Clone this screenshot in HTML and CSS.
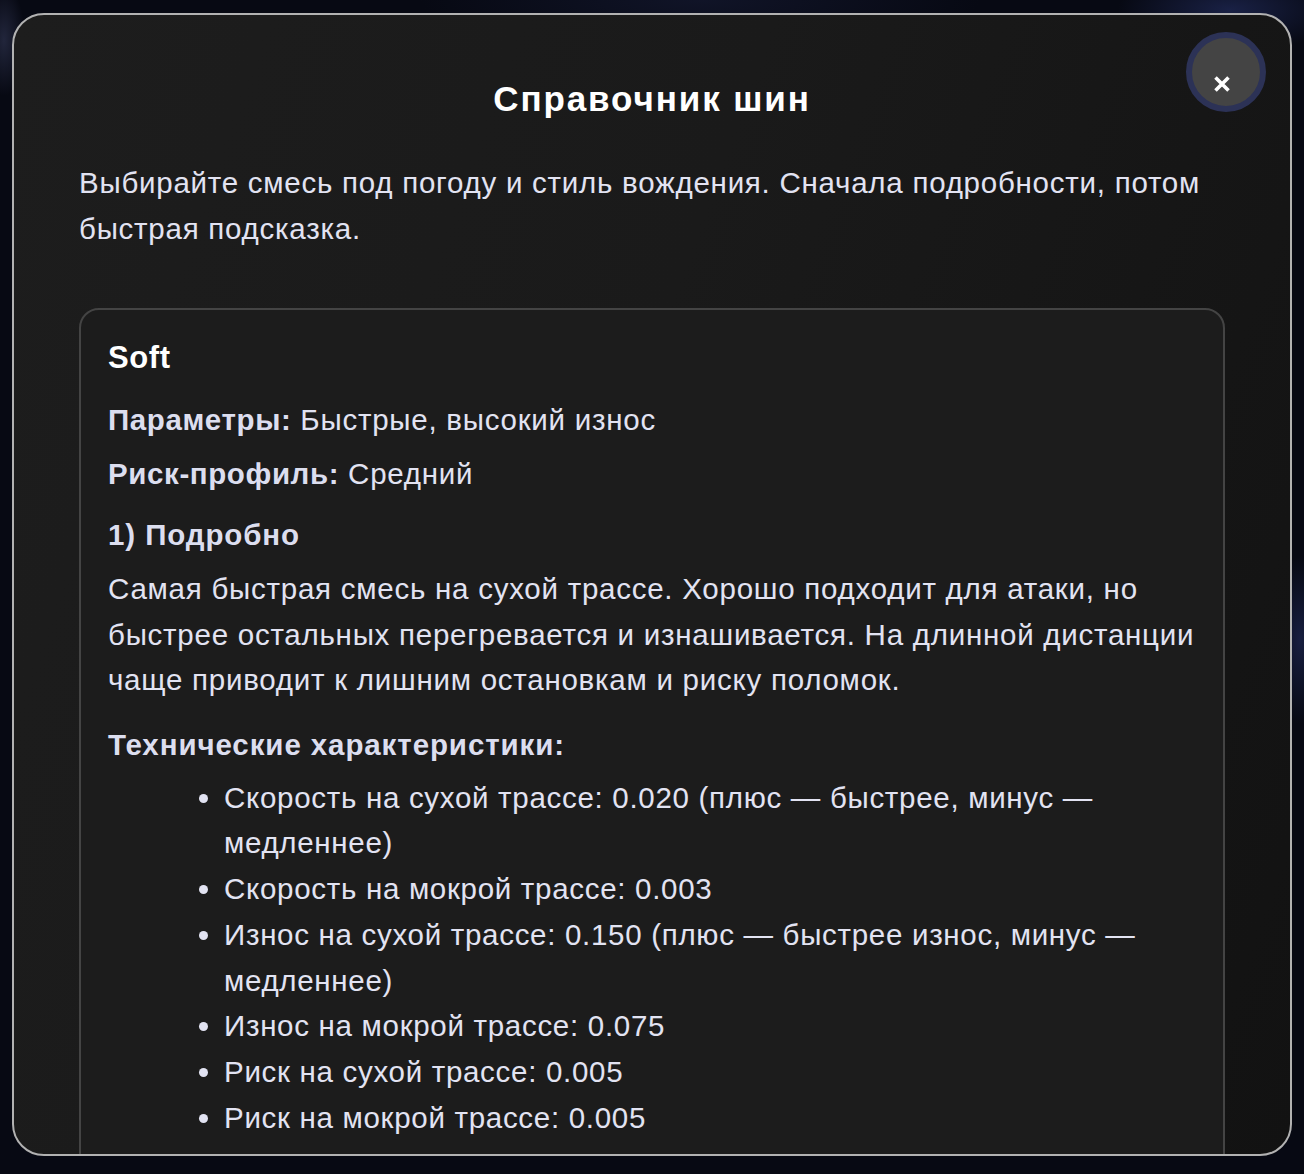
FILE: index.html
```html
<!DOCTYPE html>
<html lang="ru">
<head>
<meta charset="utf-8">
<title>Справочник шин</title>
<link rel="stylesheet" href="styles.css">
</head>
<body>
<div class="backdrop">
  <div class="modal">
    <button class="close" aria-label="Закрыть">
      <svg class="close-icon" width="18" height="18" viewBox="0 0 18 18"><path d="M2.5 2.5 L15.5 15.5 M15.5 2.5 L2.5 15.5" stroke="#ffffff" stroke-width="3.6" stroke-linecap="butt"/></svg>
    </button>
    <h1 class="title">Справочник шин</h1>
    <p class="intro">Выбирайте смесь под погоду и стиль вождения. Сначала подробности, потом быстрая подсказка.</p>
    <div class="card">
      <h2 class="card-title">Soft</h2>
      <p class="row"><b>Параметры:</b> Быстрые, высокий износ</p>
      <p class="row"><b>Риск-профиль:</b> Средний</p>
      <h3 class="sub">1) Подробно</h3>
      <p class="text">Самая быстрая смесь на сухой трассе. Хорошо подходит для атаки, но быстрее остальных перегревается и изнашивается. На длинной дистанции чаще приводит к лишним остановкам и риску поломок.</p>
      <h3 class="sub sub-tech">Технические характеристики:</h3>
      <ul class="specs">
        <li>Скорость на сухой трассе: 0.020 (плюс — быстрее, минус — медленнее)</li>
        <li>Скорость на мокрой трассе: 0.003</li>
        <li>Износ на сухой трассе: 0.150 (плюс — быстрее износ, минус — медленнее)</li>
        <li>Износ на мокрой трассе: 0.075</li>
        <li>Риск на сухой трассе: 0.005</li>
        <li>Риск на мокрой трассе: 0.005</li>
      </ul>
    </div>
  </div>
</div>
</body>
</html>
```

FILE: styles.css
```css
* { box-sizing: border-box; }

html, body {
  margin: 0;
  padding: 0;
  height: 100%;
}

body {
  font-family: "Liberation Sans", Arial, sans-serif;
  background: #070913;
  overflow: hidden;
}

.backdrop {
  height: 1174px;
  padding: 13px 12px 0 12px;
  background:
    radial-gradient(ellipse 160px 60px at 1230px 10px, rgba(40, 52, 110, 0.55), transparent 70%),
    radial-gradient(ellipse 40px 120px at 1300px 640px, rgba(40, 52, 110, 0.5), transparent 70%),
    radial-gradient(ellipse 30px 80px at 4px 40px, rgba(60, 66, 100, 0.5), transparent 70%),
    radial-gradient(ellipse 400px 80px at 700px 0px, rgba(30, 36, 70, 0.4), transparent 70%),
    #070913;
}

.modal {
  position: relative;
  width: 1280px;
  height: 1143px;
  border: 2px solid #b2b2b2;
  border-radius: 32px;
  background: linear-gradient(110deg, #1d1d1d 0%, #1a1a1a 45%, #121212 100%);
  padding: 65px 65px 0 65px;
  overflow: hidden;
  color: #e2e3f2;
}

.close {
  position: absolute;
  top: 17px;
  right: 24px;
  width: 80px;
  height: 80px;
  border-radius: 50%;
  background: #444444;
  border: 6px solid #2c3256;
  padding: 0;
  cursor: pointer;
}

.close-icon {
  position: absolute;
  left: 21px;
  top: 37px;
}

.title {
  margin: 0;
  font-size: 35px;
  line-height: 38px;
  font-weight: 700;
  letter-spacing: 1.9px;
  color: #ffffff;
  text-align: center;
}

.intro {
  margin: 42px 0 0 0;
  font-size: 29.5px;
  line-height: 45.7px;
  letter-spacing: 0.75px;
}

.card {
  margin-top: 57px;
  border: 2px solid #444444;
  border-radius: 20px;
  background: #1c1c1c;
  padding: 30px 27px 40px 27px;
}

.card-title {
  margin: 0 0 21px 0;
  font-size: 31px;
  line-height: 36px;
  font-weight: 700;
  letter-spacing: 0.6px;
  color: #ffffff;
}

.row {
  margin: 0 0 8px 0;
  font-size: 29.5px;
  line-height: 45.7px;
  letter-spacing: 0.75px;
}

.row b, .sub {
  font-weight: 700;
  color: #dcdeef;
  letter-spacing: 0.6px;
}

.sub {
  margin: 15px 0 8.4px 0;
  font-size: 29.5px;
  line-height: 45.7px;
  letter-spacing: 0.9px;
}

.sub-tech {
  margin: 19px 0 7px 0;
}

.text {
  margin: 0;
  font-size: 29.5px;
  line-height: 45.7px;
  letter-spacing: 0.75px;
}

.specs {
  margin: 0;
  padding-left: 116px;
  font-size: 29.5px;
  line-height: 45.7px;
  letter-spacing: 0.7px;
}
```
